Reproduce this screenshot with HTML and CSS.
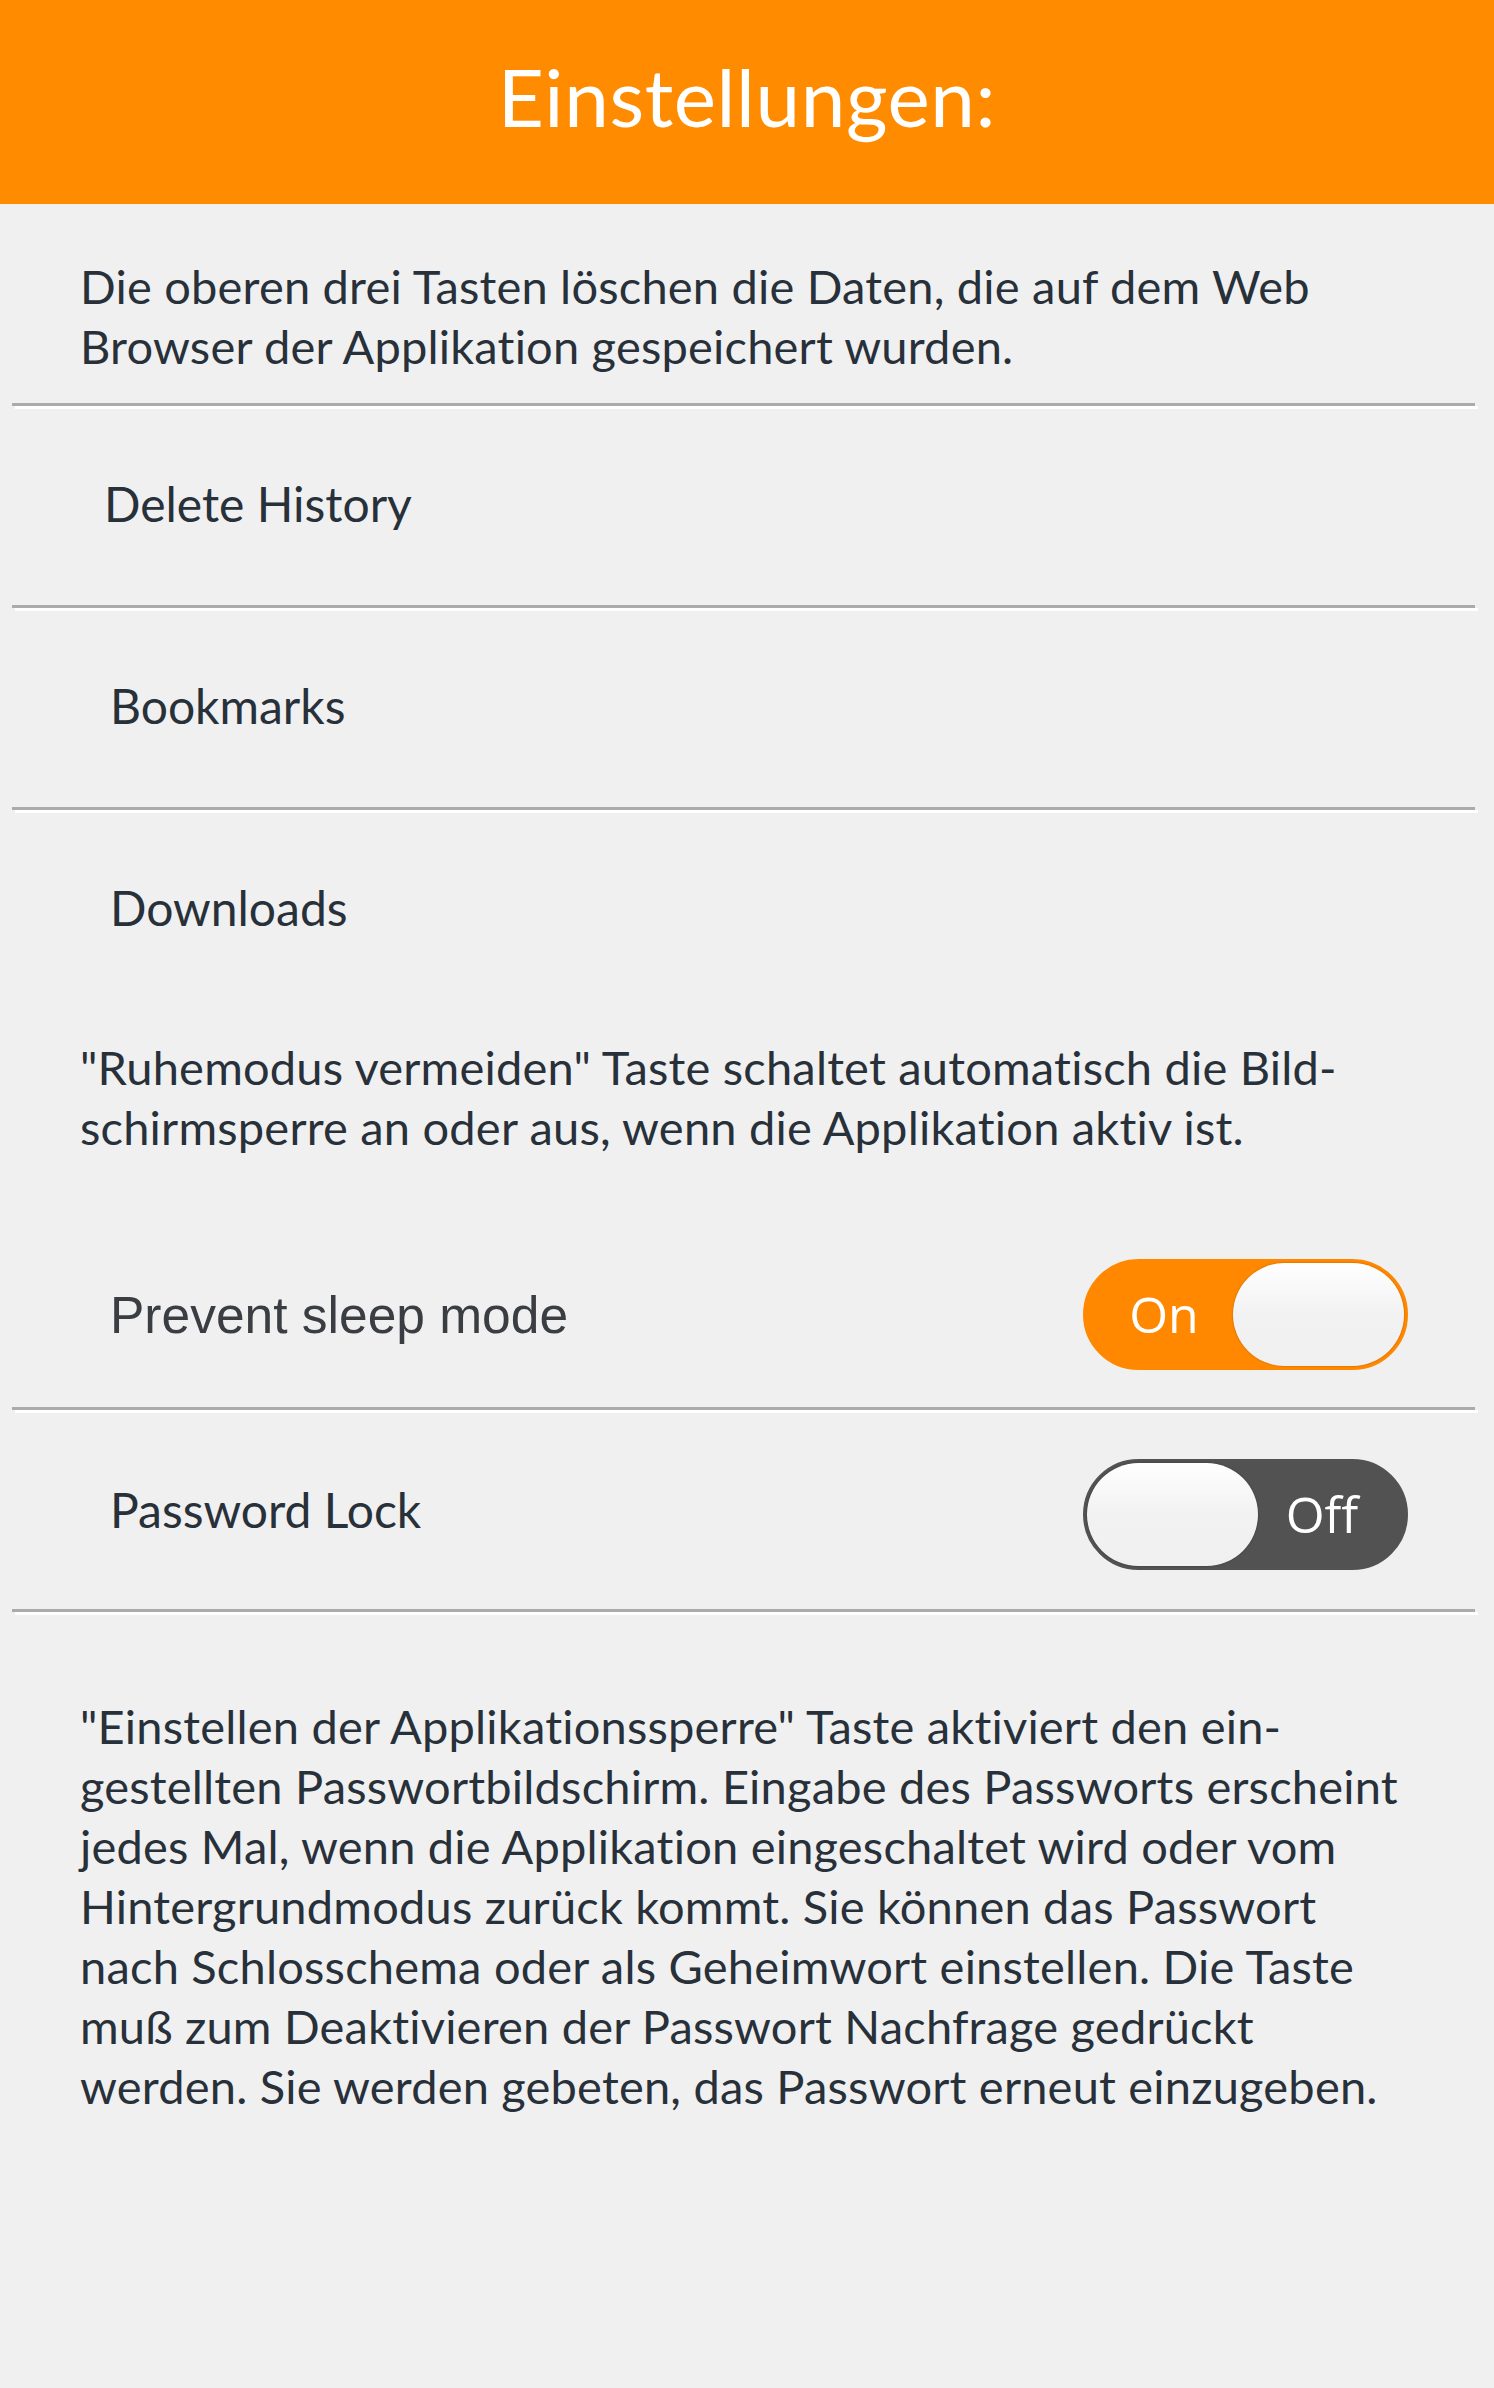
FILE: index.html
```html
<!DOCTYPE html>
<html lang="de">
<head>
<meta charset="utf-8">
<title>Einstellungen</title>
<link rel="stylesheet" href="styles.css">
</head>
<body>
<header class="topbar">
  <h1 class="title">Einstellungen:</h1>
</header>
<main class="settings">
  <p class="note note-intro">Die oberen drei Tasten löschen die Daten, die auf dem Web<br>Browser der Applikation gespeichert wurden.</p>
  <div class="sep"></div>
  <div class="row row-list"><span class="label label-first">Delete History</span></div>
  <div class="sep"></div>
  <div class="row row-list"><span class="label">Bookmarks</span></div>
  <div class="sep"></div>
  <div class="row row-list"><span class="label">Downloads</span></div>
  <p class="note note-sleep">"Ruhemodus vermeiden" Taste schaltet automatisch die Bild-<br>schirmsperre an oder aus, wenn die Applikation aktiv ist.</p>
  <div class="row row-toggle row-sleep">
    <span class="label label-arial">Prevent sleep mode</span>
    <div class="toggle toggle-on">
      <span class="toggle-text">On</span>
      <span class="knob"></span>
    </div>
  </div>
  <div class="sep"></div>
  <div class="row row-toggle">
    <span class="label label-lock">Password Lock</span>
    <div class="toggle toggle-off">
      <span class="knob"></span>
      <span class="toggle-text">Off</span>
    </div>
  </div>
  <div class="sep"></div>
  <p class="note note-lock">"Einstellen der Applikationssperre" Taste aktiviert den ein-<br>gestellten Passwortbildschirm. Eingabe des Passworts erscheint<br>jedes Mal, wenn die Applikation eingeschaltet wird oder vom<br>Hintergrundmodus zurück kommt. Sie können das Passwort<br>nach Schlosschema oder als Geheimwort einstellen. Die Taste<br>muß zum Deaktivieren der Passwort Nachfrage gedrückt<br>werden. Sie werden gebeten, das Passwort erneut einzugeben.</p>
</main>
</body>
</html>
```

FILE: styles.css
```css
html, body {
  margin: 0;
  padding: 0;
  background: #f0f0f0;
}

body {
  width: 1494px;
  min-height: 2388px;
  font-family: "Lato", "Open Sans", sans-serif;
  color: #28303a;
}

.topbar {
  box-sizing: border-box;
  height: 204px;
  padding-top: 56px;
  background: #ff8c00;
  text-align: center;
}

.title {
  margin: 0;
  font-family: "Lato", sans-serif;
  font-weight: 400;
  font-size: 80px;
  line-height: 80px;
  color: #ffffff;
  letter-spacing: 0.6px;
}

.settings {
  display: flex;
  flex-direction: column;
}

.note {
  margin: 0;
  padding-left: 80px;
  font-size: 47px;
  line-height: 60px;
  white-space: nowrap;
  letter-spacing: 0.2px;
}

.note-intro {
  padding-top: 52px;
  padding-bottom: 27px;
}

.note-sleep {
  padding-top: 28px;
  padding-bottom: 54px;
}

.note-lock {
  padding-top: 81px;
}

.sep {
  height: 3px;
  margin: 0 19px 3px 12px;
  background: #ababab;
  box-shadow: 3px 3px 0 #ffffff;
}

.row {
  box-sizing: border-box;
  height: 196px;
  display: flex;
  align-items: center;
  justify-content: space-between;
  padding-left: 110px;
  padding-right: 86px;
}

.row-list {
  padding-bottom: 7px;
}

.row-toggle {
  padding-top: 6px;
}

.row-sleep {
  padding-top: 10px;
}

.label {
  font-size: 48px;
  line-height: 1;
  color: #28303a;
}

.label-first {
  margin-left: -6px;
}

.label-lock {
  margin-top: -8px;
}

.label-arial {
  font-family: "Liberation Sans", Arial, sans-serif;
  font-size: 51.5px;
  color: #3a3d42;
  margin-top: 4px;
}

.toggle {
  box-sizing: border-box;
  width: 325px;
  height: 111px;
  border-radius: 56px;
  border: 4px solid;
  display: flex;
  align-items: center;
}

.toggle-on {
  background: #ff8800;
  border-color: #ff8800;
}

.toggle-off {
  background: #525252;
  border-color: #525252;
}

.toggle-text {
  flex: 1;
  text-align: center;
  font-family: "Open Sans", "Noto Sans", sans-serif;
  font-size: 50px;
  line-height: 1;
  color: #ffffff;
}

.toggle-on .toggle-text {
  padding-left: 8px;
}

.toggle-off .toggle-text {
  padding-right: 18px;
}

.knob {
  box-sizing: border-box;
  width: 171px;
  height: 103px;
  border-radius: 52px;
  background: linear-gradient(#ffffff 0%, #f2f2f2 50%, #f0f0f0 100%);
  box-shadow: 0 0 2px rgba(0, 0, 0, 0.35);
}
```
